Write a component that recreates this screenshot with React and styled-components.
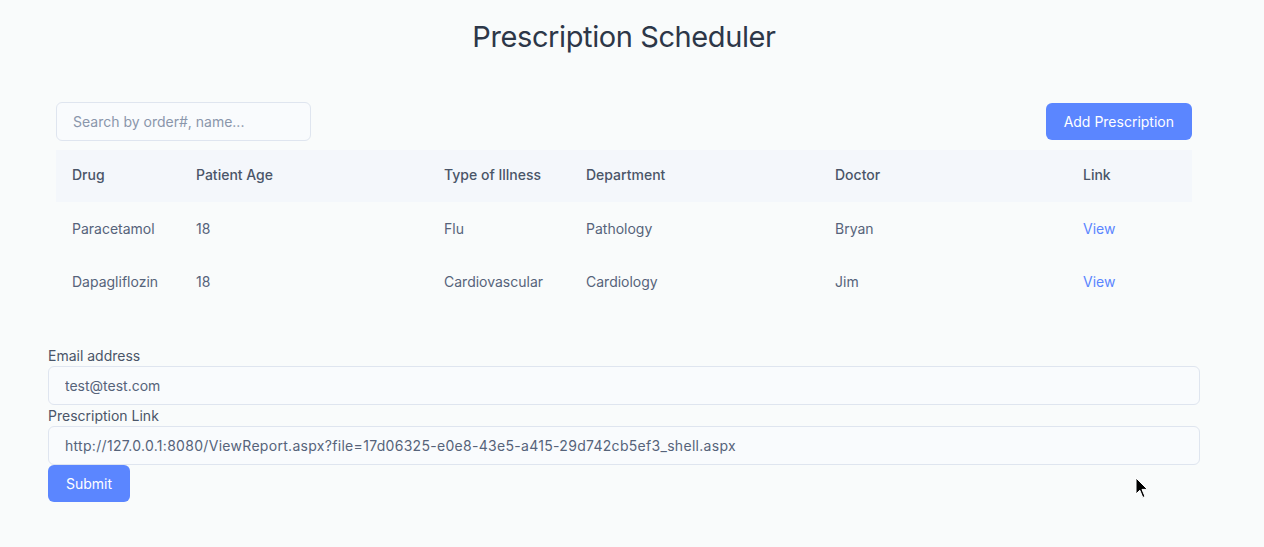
import React from "react";
import styled, { createGlobalStyle } from "styled-components";

const GlobalStyle = createGlobalStyle`
  body {
    margin: 0;
    background: #f9fbfb;
    font-family: Inter, "Noto Sans", sans-serif;
    color: #4a5568;
  }
`;

const prescriptions = [
  { drug: "Paracetamol", age: 18, illness: "Flu", department: "Pathology", doctor: "Bryan" },
  { drug: "Dapagliflozin", age: 18, illness: "Cardiovascular", department: "Cardiology", doctor: "Jim" },
];

const columns = [
  { label: "Drug", width: 124 },
  { label: "Patient Age", width: 248 },
  { label: "Type of Illness", width: 142 },
  { label: "Department", width: 249 },
  { label: "Doctor", width: 248 },
  { label: "Link", width: 125 },
];

const App = () => (
  <>
    <GlobalStyle />
    <Page>
      <Title>Prescription Scheduler</Title>
      <TableSection>
        <Toolbar>
          <SearchInput placeholder="Search by order#, name..." />
          <Button>Add Prescription</Button>
        </Toolbar>
        <Table>
          <colgroup>
            {columns.map((c) => (
              <col key={c.label} style={{ width: c.width }} />
            ))}
          </colgroup>
          <thead>
            <tr>
              {columns.map((c) => (
                <Th key={c.label}>{c.label}</Th>
              ))}
            </tr>
          </thead>
          <tbody>
            {prescriptions.map((p) => (
              <tr key={p.drug}>
                <Td>{p.drug}</Td>
                <Td>{p.age}</Td>
                <Td>{p.illness}</Td>
                <Td>{p.department}</Td>
                <Td>{p.doctor}</Td>
                <Td>
                  <ViewLink href="#">View</ViewLink>
                </Td>
              </tr>
            ))}
          </tbody>
        </Table>
      </TableSection>

      <Form onSubmit={(e) => e.preventDefault()}>
        <Label htmlFor="email">Email address</Label>
        <TextInput id="email" defaultValue="test@test.com" />
        <Label htmlFor="link">Prescription Link</Label>
        <TextInput
          id="link"
          $wide
          defaultValue="http://127.0.0.1:8080/ViewReport.aspx?file=17d06325-e0e8-43e5-a415-29d742cb5ef3_shell.aspx"
        />
        <Button type="submit">Submit</Button>
      </Form>

      <Cursor width="15" height="23" viewBox="0 0 15 23">
        <path
          d="M1 1 L1 17 L4.8 13.2 L7.8 20.5 L10 19.5 L7 12.4 L12.4 12.4 Z"
          fill="#000"
          stroke="#fff"
          strokeWidth="1"
          strokeLinejoin="round"
        />
      </Cursor>
    </Page>
  </>
);

const Page = styled.div`
  position: relative;
  min-height: 547px;
  padding: 18px 64px 0 48px;
  box-sizing: border-box;
`;

const Title = styled.h1`
  margin: 0;
  text-align: center;
  font-size: 29px;
  font-weight: 400;
  letter-spacing: -0.4px;
  color: #2d3748;
  line-height: 38px;
`;

const TableSection = styled.section`
  margin: 46px 8px 0;
`;

const Toolbar = styled.div`
  display: flex;
  justify-content: space-between;
  align-items: flex-start;
  margin-bottom: 9px;
`;

const SearchInput = styled.input`
  width: 255px;
  height: 39px;
  box-sizing: border-box;
  border: 1px solid #dfe5ef;
  border-radius: 6px;
  background: #f9fbfd;
  padding: 0 16px;
  font-family: inherit;
  font-size: 14px;
  color: #4a5568;
  outline: none;

  &::placeholder {
    color: #8a96ab;
  }
`;

const Button = styled.button`
  height: 37px;
  margin-top: 1px;
  padding: 0 18px;
  border: none;
  border-radius: 6px;
  background: #5b86ff;
  color: #fff;
  font-family: inherit;
  font-size: 14px;
  cursor: pointer;
  align-self: flex-start;

  form & {
    margin-top: 0;
  }
`;

const Table = styled.table`
  width: 100%;
  border-collapse: collapse;
  table-layout: fixed;
`;

const Th = styled.th`
  height: 52px;
  padding: 0 16px 3px;
  box-sizing: border-box;
  background: #f4f7fb;
  text-align: left;
  font-size: 14px;
  font-weight: 500;
  color: #4a5568;
`;

const Td = styled.td`
  height: 53px;
  padding: 0 16px;
  font-size: 14px;
  color: #56637a;
`;

const ViewLink = styled.a`
  color: #5b86ff;
  text-decoration: none;
`;

const Form = styled.form`
  display: flex;
  flex-direction: column;
  margin-top: 37px;
`;

const Label = styled.label`
  font-size: 14px;
  line-height: 21px;
  color: #4a5568;
`;

const TextInput = styled.input`
  height: 39px;
  box-sizing: border-box;
  border: 1px solid #dfe5ef;
  border-radius: 6px;
  background: #f9fbfd;
  padding: 0 16px;
  font-family: inherit;
  font-size: 14px;
  letter-spacing: ${({ $wide }) => ($wide ? "0.3px" : "0")};
  color: #56637a;
  outline: none;
`;

const Cursor = styled.svg`
  position: absolute;
  left: 1135px;
  top: 477px;
`;

export default App;
